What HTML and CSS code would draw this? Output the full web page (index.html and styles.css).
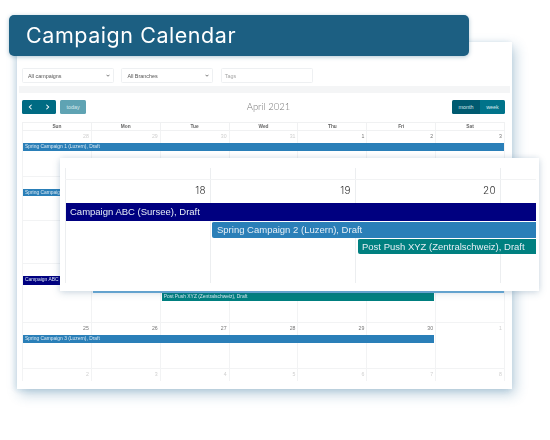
FILE: index.html
```html
<!DOCTYPE html>
<html lang="en">
<head>
<meta charset="utf-8">
<title>Campaign Calendar</title>
<link rel="stylesheet" href="styles.css">
</head>
<body>
<main class="stage">
  <section class="card-back">
    <div class="filters">
      <div class="field field-select"><span>All campaigns</span><svg class="caret" viewBox="0 0 8 5"><path d="M1 1l3 3 3-3"/></svg></div>
      <div class="field field-select"><span>All Branches</span><svg class="caret" viewBox="0 0 8 5"><path d="M1 1l3 3 3-3"/></svg></div>
      <div class="field field-input"><span>Tags</span></div>
    </div>
    <div class="strip"></div>
    <div class="toolbar">
      <div class="tool-left">
        <div class="btn-group">
          <span class="btn btn-nav"><svg class="chev" viewBox="0 0 6 8"><path d="M4.5 1L1.5 4l3 3"/></svg></span>
          <span class="btn btn-nav"><svg class="chev" viewBox="0 0 6 8"><path d="M1.5 1l3 3-3 3"/></svg></span>
        </div>
        <span class="btn btn-today">today</span>
      </div>
      <h2 class="month-title">April 2021</h2>
      <div class="btn-group btn-views">
        <span class="btn btn-month">month</span>
        <span class="btn btn-week">week</span>
      </div>
    </div>
    <div class="calendar">
      <div class="dow"><span>Sun</span><span>Mon</span><span>Tue</span><span>Wed</span><span>Thu</span><span>Fri</span><span>Sat</span></div>

      <div class="week w1">
        <div class="day off">28</div><div class="day off">29</div><div class="day off">30</div><div class="day off">31</div><div class="day">1</div><div class="day">2</div><div class="day">3</div>
        <div class="ev ev-blue s1-7 r2">Spring Campaign 1 (Luzern), Draft</div>
      </div>
      <div class="week w2">
        <div class="day">4</div><div class="day">5</div><div class="day">6</div><div class="day">7</div><div class="day">8</div><div class="day">9</div><div class="day">10</div>
        <div class="ev ev-blue ev-short s1-7 r2">Spring Campaign 2 (Luzern), Draft</div>
      </div>
      <div class="week w3">
        <div class="day">11</div><div class="day">12</div><div class="day">13</div><div class="day">14</div><div class="day">15</div><div class="day">16</div><div class="day">17</div>
      </div>
      <div class="week w4">
        <div class="day">18</div><div class="day">19</div><div class="day">20</div><div class="day">21</div><div class="day">22</div><div class="day">23</div><div class="day">24</div>
        <div class="ev ev-navy s1-7 r2">Campaign ABC (Sursee), Draft</div>
        <div class="ev ev-under s2-7 r3">Spring Campaign 2 (Luzern), Draft</div>
        <div class="ev ev-teal s3-6 r4">Post Push XYZ (Zentralschweiz), Draft</div>
      </div>
      <div class="week w5">
        <div class="day">25</div><div class="day">26</div><div class="day">27</div><div class="day">28</div><div class="day">29</div><div class="day">30</div><div class="day off">1</div>
        <div class="ev ev-blue s1-6 r2">Spring Campaign 3 (Luzern), Draft</div>
      </div>
      <div class="week w6">
        <div class="day off">2</div><div class="day off">3</div><div class="day off">4</div><div class="day off">5</div><div class="day off">6</div><div class="day off">7</div><div class="day off">8</div>
      </div>
    </div>
  </section>

  <header class="banner"><h1>Campaign Calendar</h1></header>

  <section class="card-front">
    <div class="zoom-head"><i></i><i></i><i></i><i></i></div>
    <div class="zoom-week">
      <div class="zday">18</div><div class="zday">19</div><div class="zday">20</div><div class="zday"></div>
      <div class="zev zev-navy za">Campaign ABC (Sursee), Draft</div>
      <div class="zev zev-blue zb">Spring Campaign 2 (Luzern), Draft</div>
      <div class="zev zev-teal zc">Post Push XYZ (Zentralschweiz), Draft</div>
    </div>
  </section>
</main>
</body>
</html>
```
FILE: styles.css
```css
* { box-sizing: border-box; }
html, body { margin: 0; padding: 0; background: #fff; }
body { font-family: "Liberation Sans", Arial, sans-serif; overflow: hidden; }
.stage { position: relative; width: 550px; height: 440px; overflow: hidden; background: #fff; }

/* back card */
.card-back {
  position: absolute; left: 17px; top: 42px; width: 495px; height: 347px;
  background: #fff; padding: 26px 2px 0;
  box-shadow: 3px 5px 12px rgba(40, 105, 150, .32), -2px 1px 6px rgba(40, 105, 150, .16);
  filter: blur(.45px);
}
.filters { display: flex; gap: 7.7px; margin-left: 3px; }
.field {
  display: flex; align-items: center; justify-content: space-between;
  height: 15px; border: 1px solid #eef0f2; border-radius: 1.5px;
  font-size: 5.4px; color: #555; padding: 0 3px 0 5px;
}
.field-select { width: 91.7px; }
.field-input { width: 92px; color: #a5a5a5; padding-left: 3px; }
.caret { width: 4px; height: 3px; fill: none; stroke: #333; stroke-width: 1.3; }
.strip { height: 7px; margin-top: 3px; background: #f4f5f6; }
.toolbar {
  position: relative; display: flex; align-items: center; justify-content: space-between;
  height: 14px; margin: 7px 5px 0 3px;
}
.tool-left { display: flex; gap: 4px; }
.btn-group { display: flex; border-radius: 1.5px; overflow: hidden; }
.btn {
  display: flex; align-items: center; justify-content: center;
  height: 14px; font-size: 5.4px; color: #d7e7ec;
}
.btn-nav { width: 17px; background: #006b83; }
.chev { width: 5px; height: 6px; fill: none; stroke: #fff; stroke-width: 1.4; }
.btn-today { width: 26px; background: #5fa3b3; border-radius: 1.5px; }
.btn-month { width: 28px; background: #005a70; }
.btn-week { width: 25px; background: #00738a; }
.month-title {
  position: absolute; left: 0; right: 0; margin: 0; text-align: center;
  font-family: "Lato", sans-serif; font-size: 9.5px; font-weight: 300; color: #777; line-height: 14px;
  padding-left: 10px;
}
.calendar { margin: 8px 5px 0 3px; }
.dow, .week { display: grid; grid-template-columns: repeat(7, 1fr); }
.dow { height: 9px; border: 1px solid #f0f1f2; border-width: 1px 1px 1px 0; }
.dow span {
  border-left: 1px solid #f0f1f2; text-align: center;
  font-size: 4.8px; font-weight: 700; line-height: 8px; color: #666;
}
.week { border-bottom: 1px solid #f2f3f4; border-right: 1px solid #f2f3f4; overflow: hidden; }
.w1 { height: 46px; grid-template-rows: 12px 8px 1fr; }
.w2 { height: 44px; grid-template-rows: 12px 7px 1fr; }
.w3 { height: 43px; }
.w4 { height: 59px; grid-template-rows: 12px 8.5px 8.5px 8px 1fr; }
.w5 { height: 46px; grid-template-rows: 12px 8px 1fr; }
.w6 { height: 12px; border-bottom: 0; }
.day {
  grid-row: 1 / 9; border-left: 1px solid #f2f3f4;
  font-size: 5.2px; line-height: 11px; text-align: right; padding-right: 2px; color: #777;
}
.day:nth-child(1) { grid-column: 1; } .day:nth-child(2) { grid-column: 2; }
.day:nth-child(3) { grid-column: 3; } .day:nth-child(4) { grid-column: 4; }
.day:nth-child(5) { grid-column: 5; } .day:nth-child(6) { grid-column: 6; }
.day:nth-child(7) { grid-column: 7; }
.day.off { color: #cfcfcf; }
.ev {
  z-index: 1; margin-left: 1px; font-size: 4.9px; line-height: 8px; color: #dce9f2;
  padding-left: 2px; white-space: nowrap; overflow: hidden; min-width: 0;
}
.ev-short { line-height: 7px; }
.ev-blue { background: #2a7fb8; }
.ev-navy { background: #000080; }
.ev-teal { background: #008080; }
.ev-under { background: #6fb0dc; margin-bottom: .4px; }
.r2 { grid-row: 2; } .r3 { grid-row: 3; } .r4 { grid-row: 4; }
.s1-7 { grid-column: 1 / 8; }
.s2-7 { grid-column: 2 / 8; margin-left: 2px; }
.s3-6 { grid-column: 3 / 7; margin-left: 2px; margin-right: 1px; }
.s1-6 { grid-column: 1 / 7; margin-right: 1px; }

/* banner */
.banner {
  position: absolute; left: 9px; top: 15px; width: 460px; height: 41px;
  display: flex; align-items: center; padding-left: 17px;
  background: #1c5f82; border-radius: 5px;
  box-shadow: 0 1px 4px rgba(28, 95, 130, .35);
}
.banner h1 {
  margin: 0; font-family: "Inter", sans-serif; font-weight: 400; font-size: 21.5px;
  letter-spacing: .55px; line-height: 41px; color: #fff; filter: blur(.2px);
}

/* zoomed card */
.card-front {
  position: absolute; left: 60px; top: 158px; width: 479px; height: 133px;
  background: #fff; padding: 10px 3px 0 5px;
  box-shadow: 0 2px 8px rgba(40, 90, 125, .18), 0 0 6px rgba(40, 90, 125, .1);
  filter: blur(.3px);
}
.zoom-head {
  display: grid; grid-template-columns: repeat(3, 145px) 1fr; height: 12px;
  border-bottom: 1px solid #f2f3f4;
}
.zoom-head i { border-left: 1px solid #eceef0; }
.zoom-week {
  display: grid; grid-template-columns: repeat(3, 145px) 1fr;
  grid-template-rows: 23px 17.5px 17.5px 16px 1fr; height: 103px;
}
.zday {
  grid-row: 1 / 6; border-left: 1px solid #eceef0;
  font-family: "Inter", sans-serif; font-weight: 300; font-size: 10px; letter-spacing: .4px; line-height: 20px;
  text-align: right; padding-right: 4px; color: #333;
}
.zday:nth-child(1) { grid-column: 1; } .zday:nth-child(2) { grid-column: 2; }
.zday:nth-child(3) { grid-column: 3; } .zday:nth-child(4) { grid-column: 4; }
.zev {
  z-index: 1; font-size: 9.5px; color: #e6eef5; padding-left: 4px; padding-bottom: 1px;
  white-space: nowrap; overflow: hidden; display: flex; align-items: center;
}
.zev-navy { background: #000080; }
.zev-blue { background: #2a7fb8; border-top: 1px solid #fff; border-radius: 2px 0 0 2px; padding-left: 5px; }
.zev-teal { background: #008080; border-top: 1px solid #fff; border-radius: 2px 0 0 2px; }
.za { grid-row: 2; grid-column: 1 / 5; margin-left: 1px; }
.zb { grid-row: 3; grid-column: 2 / 5; margin-left: 2px; }
.zc { grid-row: 4; grid-column: 3 / 5; margin-left: 3px; }
```
